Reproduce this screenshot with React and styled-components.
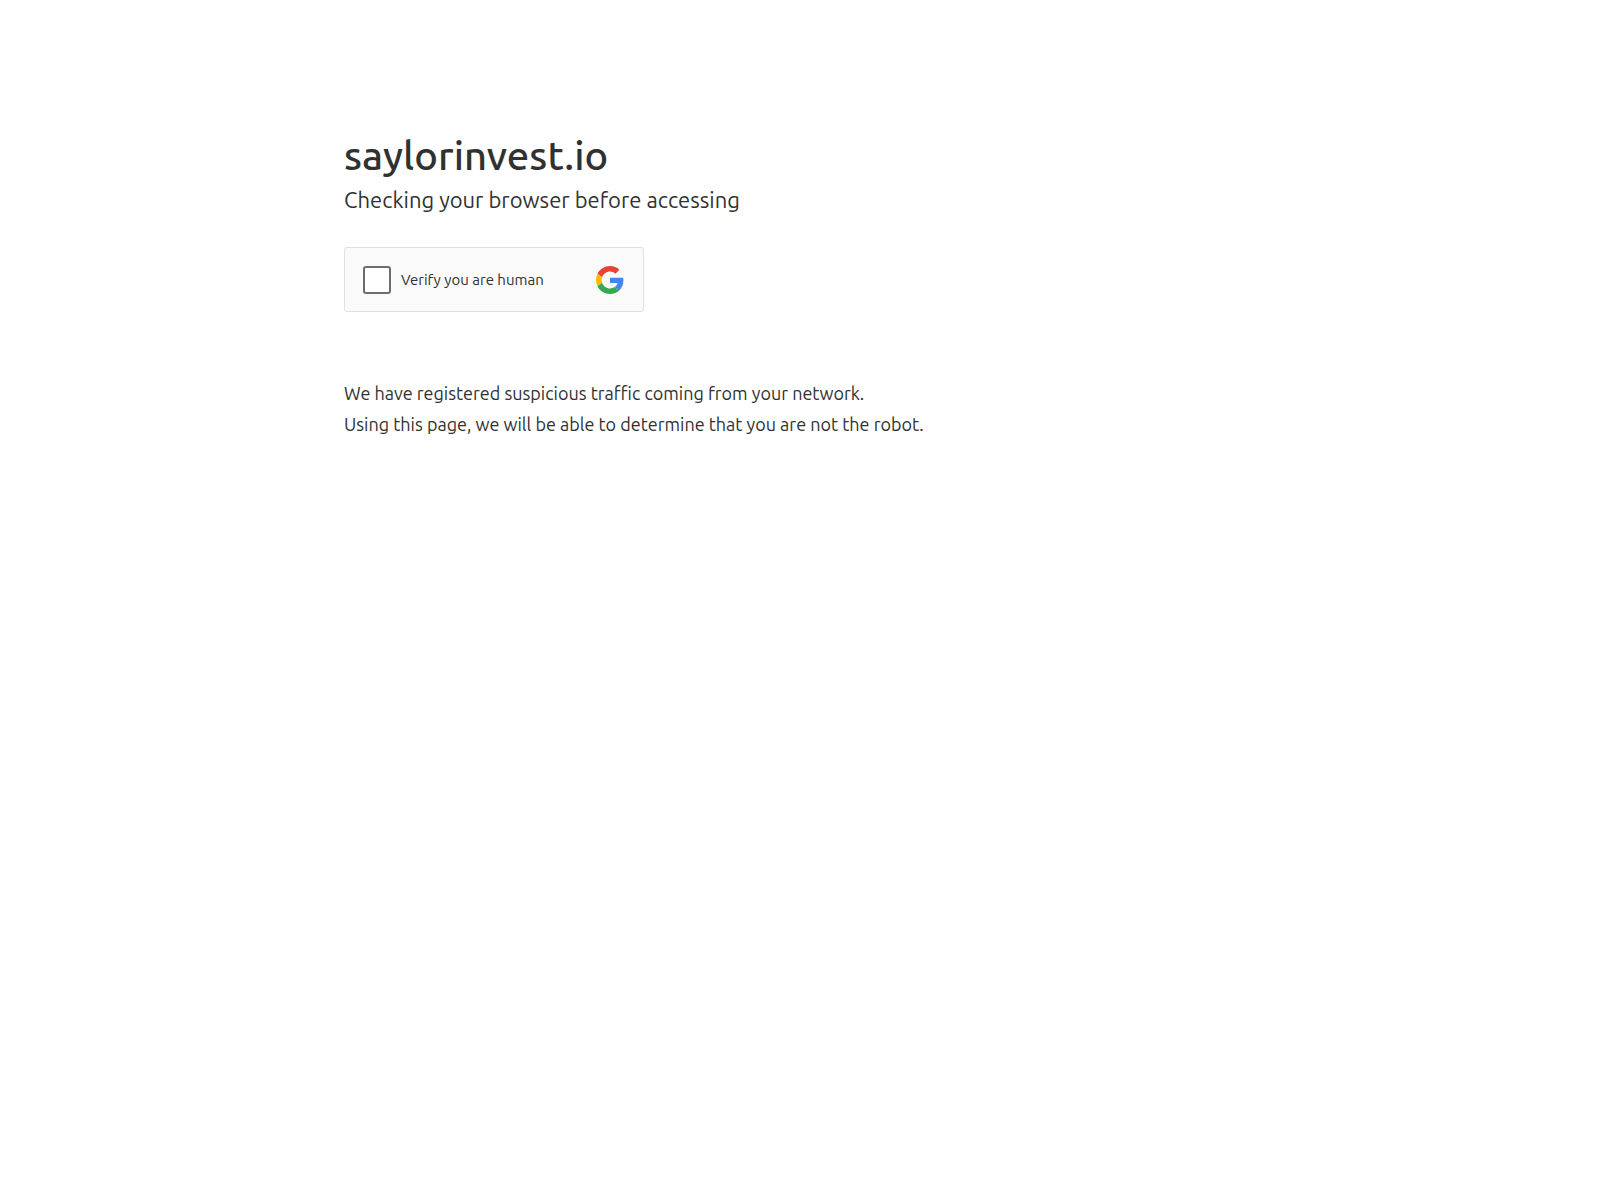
import React from "react";
import styled, { createGlobalStyle } from "styled-components";

const GlobalStyle = createGlobalStyle`
  *, *::before, *::after {
    box-sizing: border-box;
  }

  body {
    margin: 0;
    background: #ffffff;
    color: #313131;
    font-family: Ubuntu, "Noto Sans", sans-serif;
  }
`;

const Main = styled.main`
  max-width: 960px;
  margin: 0 auto;
  padding: 128px 24px 48px;
`;

const Title = styled.h1`
  margin: 0;
  font-size: 40px;
  font-weight: 500;
  line-height: 56px;
`;

const Subtitle = styled.h2`
  margin: 0;
  font-size: 22px;
  font-weight: 400;
  line-height: 32px;
`;

const Challenge = styled.div`
  display: flex;
  align-items: center;
  justify-content: space-between;
  width: 300px;
  max-width: 100%;
  height: 65px;
  margin: 31px 0 66px;
  padding: 0 19px 0 18px;
  border: 1px solid #e0e0e0;
  border-radius: 3px;
  background: #fafafa;
`;

const CheckLabel = styled.label`
  display: flex;
  align-items: center;
  gap: 10px;
  font-size: 15px;
  line-height: 20px;
  cursor: pointer;
`;

const Checkbox = styled.input`
  appearance: none;
  width: 28px;
  height: 28px;
  margin: 0;
  border: 2px solid #6d6d6d;
  border-radius: 3px;
  background: #ffffff;
  cursor: pointer;

  &:checked {
    background: #4285f4;
  }
`;

const Logo = styled.svg`
  display: block;
  width: 28px;
  height: 28px;
`;

const Message = styled.p`
  margin: 0;
  font-size: 18px;
  line-height: 31px;
`;

function GoogleLogo() {
  return (
    <Logo viewBox="0 0 48 48" role="img" aria-label="Google">
      <path fill="#ea4335" d="M24 9.5c3.54 0 6.71 1.22 9.21 3.6l6.85-6.85C35.9 2.38 30.47 0 24 0 14.62 0 6.51 5.38 2.56 13.22l7.98 6.19C12.43 13.72 17.74 9.5 24 9.5z" />
      <path fill="#4285f4" d="M46.98 24.55c0-1.57-.15-3.09-.38-4.55H24v9.02h12.94c-.58 2.96-2.26 5.48-4.78 7.18l7.73 6c4.51-4.18 7.09-10.36 7.09-17.65z" />
      <path fill="#fbbc05" d="M10.53 28.59c-.48-1.45-.76-2.99-.76-4.59s.27-3.14.76-4.59l-7.98-6.19C.92 16.46 0 20.12 0 24c0 3.88.92 7.54 2.56 10.78l7.97-6.19z" />
      <path fill="#34a853" d="M24 48c6.48 0 11.93-2.13 15.89-5.81l-7.73-6c-2.15 1.45-4.92 2.3-8.16 2.3-6.26 0-11.57-4.22-13.47-9.91l-7.98 6.19C6.51 42.62 14.62 48 24 48z" />
    </Logo>
  );
}

export default function App() {
  return (
    <>
      <GlobalStyle />
      <Main>
        <Title>saylorinvest.io</Title>
        <Subtitle>Checking your browser before accessing</Subtitle>
        <Challenge>
          <CheckLabel htmlFor="human">
            <Checkbox id="human" type="checkbox" />
            Verify you are human
          </CheckLabel>
          <GoogleLogo />
        </Challenge>
        <Message>We have registered suspicious traffic coming from your network.</Message>
        <Message>Using this page, we will be able to determine that you are not the robot.</Message>
      </Main>
    </>
  );
}
